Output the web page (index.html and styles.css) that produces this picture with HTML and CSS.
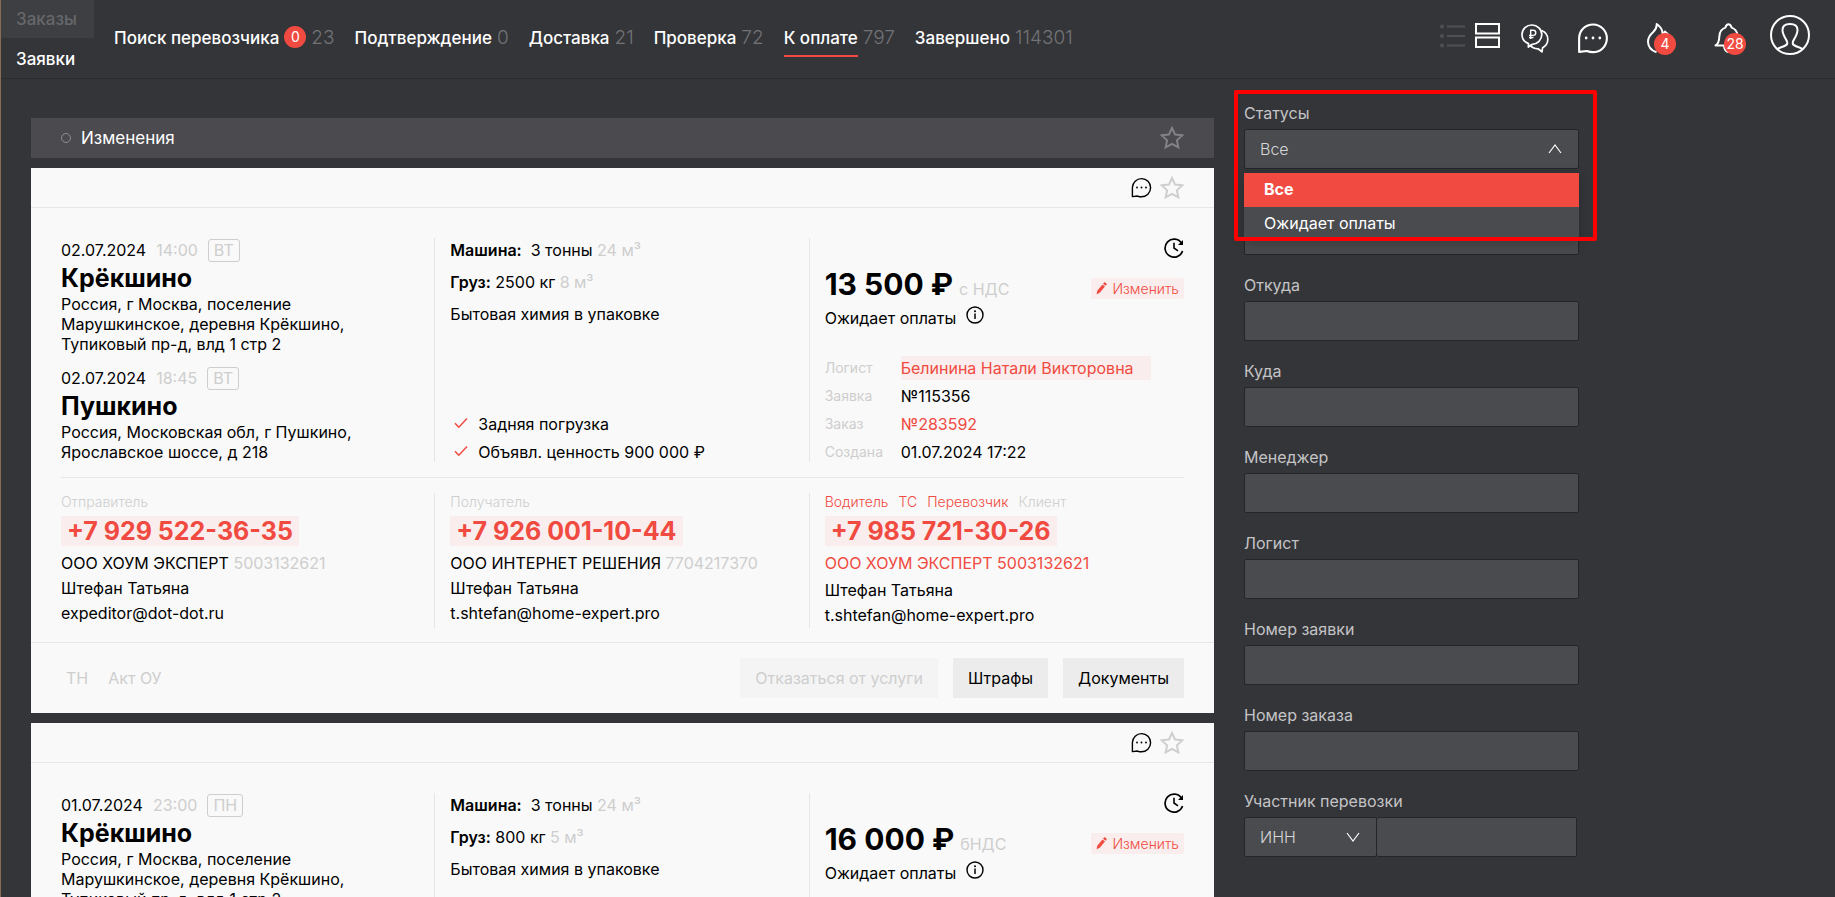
FILE: index.html
```html
<!DOCTYPE html>
<html lang="ru">
<head>
<meta charset="utf-8">
<title>Заявки</title>
<meta name="viewport" content="width=device-width, initial-scale=1">
<link rel="stylesheet" href="styles.css">
</head>
<body>
<svg class="sprite" aria-hidden="true">
  <symbol id="i-star" viewBox="0 0 22 22"><path d="M11 1.8l2.8 6 6.6.8-4.900 4.500 1.300 6.500L11 16.400l-5.800 3.200 1.300-6.500L1.600 8.600l6.600-.8z" fill="none" stroke="currentColor" stroke-width="1.8" stroke-linejoin="miter"/></symbol>
  <symbol id="i-chat" viewBox="0 0 30 30"><path d="M2 28V15A13 13 0 1 1 15 28.300c-2 0-4-.4-5.500-1.100z" fill="none" stroke="currentColor" stroke-width="2" stroke-linejoin="round"/><circle cx="8.600" cy="15" r="1.300" fill="currentColor"/><circle cx="15" cy="15" r="1.300" fill="currentColor"/><circle cx="21.400" cy="15" r="1.300" fill="currentColor"/></symbol>
  <symbol id="i-clock" viewBox="0 0 20 20"><path d="M17.600 5.200A9 9 0 1 0 18.600 13" fill="none" stroke="currentColor" stroke-width="1.700"/><path d="M19 2v5h-5z" fill="currentColor"/><path d="M10 4.800V10l4 2.800" fill="none" stroke="currentColor" stroke-width="1.600"/></symbol>
  <symbol id="i-info" viewBox="0 0 18 18"><circle cx="9" cy="9" r="8" fill="none" stroke="currentColor" stroke-width="1.400"/><path d="M9 7.600v5.400" stroke="currentColor" stroke-width="1.500"/><circle cx="9" cy="5.200" r="1" fill="currentColor"/></symbol>
  <symbol id="i-pen" viewBox="0 0 12 14"><path d="M0.600 13.400l.8-4L7 2.500l2.800 2.300-5.700 6.800zM7.700 1.700L8.800.5c.4-.4.8-.4 1.200-.1l1.400 1.200c.4.3.4.8.1 1.200l-1 1.200z" fill="currentColor"/></symbol>
  <symbol id="i-check" viewBox="0 0 14 12"><path d="M1 6.200l3.800 4L13 1.500" fill="none" stroke="currentColor" stroke-width="1.500"/></symbol>
</svg>
<div class="app">
  <header class="header">
    <nav class="modes" aria-label="Раздел">
      <a class="mode mode--muted" href="#orders">Заказы</a>
      <a class="mode" href="#requests">Заявки</a>
    </nav>
    <nav class="stages" aria-label="Этапы">
      <a class="stage" href="#search"><span class="stage__name">Поиск перевозчика</span><span class="badge">0</span><span class="stage__count">23</span></a>
      <a class="stage" href="#confirm"><span class="stage__name">Подтверждение</span><span class="stage__count">0</span></a>
      <a class="stage" href="#delivery"><span class="stage__name">Доставка</span><span class="stage__count">21</span></a>
      <a class="stage" href="#check"><span class="stage__name">Проверка</span><span class="stage__count">72</span></a>
      <a class="stage stage--active" href="#pay"><span class="stage__name">К оплате</span><span class="stage__count">797</span></a>
      <a class="stage" href="#done"><span class="stage__name">Завершено</span><span class="stage__count">114301</span></a>
    </nav>
    <div class="tools">
      <button class="tool tool--list" aria-label="Список"><svg width="26" height="24" viewBox="0 0 26 24" fill="currentColor"><circle cx="2" cy="2.500" r="2"/><circle cx="2" cy="12" r="2"/><circle cx="2" cy="21.500" r="2"/><path d="M7 1.500h18v2H7zM7 11h18v2H7zM7 20.500h18v2H7z"/></svg></button>
      <button class="tool tool--grid" aria-label="Карточки"><svg width="25" height="25" viewBox="0 0 25 25" fill="none" stroke="currentColor" stroke-width="2"><path d="M1 1h23v9.500H1zM1 14.500h23V24H1z"/></svg></button>
      <button class="tool tool--money" aria-label="Ставки"><svg width="28" height="29" viewBox="0 0 28 29" fill="none" stroke="currentColor" stroke-width="1.700"><path d="M7.500 19.600c-4-1.500-6.500-5-6.500-9A9.800 9.800 0 0 1 11 1c5.400 0 9.800 4.300 9.800 9.600s-4.300 9.500-9.400 9.700L7.300 23z" stroke-linejoin="round"/><path d="M20.500 6.500c3.800 1.500 6.300 5 6.300 8.800 0 3.700-2 6.700-5.200 8.400L21 27.800l-4-3c-3.500 0-6.500-1.500-8.300-4" stroke-linejoin="round"/><path d="M9.700 15V6.300h2.500a2.500 2.500 0 0 1 0 5.100H8M8 13.500h4.500" stroke-width="1.400"/></svg></button>
      <button class="tool tool--chat" aria-label="Сообщения"><svg width="32" height="32"><use href="#i-chat"/></svg></button>
      <button class="tool tool--fire" aria-label="Срочные"><svg width="26" height="31" viewBox="0 0 26 31" fill="none" stroke="currentColor" stroke-width="2"><path d="M9.500 29.300C4.500 27.500 1 23.500 1 18.500c0-4 2-6.700 5-9.300C8.500 6.900 10 4.500 9.700 1c4 2.500 6 6 6 10.500 1-.6 1.800-1.700 2.200-3C22.500 12 25 15.500 25 19c0 5-4 9-9 10.300" stroke-linejoin="round"/></svg><span class="badge badge--over">4</span></button>
      <button class="tool tool--bell" aria-label="Уведомления"><svg width="29" height="31" viewBox="0 0 29 31" fill="none" stroke="currentColor" stroke-width="2"><path d="M1.500 22.500c3-1.500 3.700-4.500 3.900-9.500.2-4.300 2.500-7.200 6-8.400C12 2.500 13 1.300 14.500 1.300s2.500 1.200 3.100 3.300c3.500 1.200 5.800 4.100 6 8.400.2 5 .9 8 3.900 9.500zM10 23c.5 4 2.500 6 4.500 6s4-2 4.500-6" stroke-linejoin="round"/></svg><span class="badge badge--over">28</span></button>
      <button class="tool tool--user" aria-label="Профиль"><svg width="40" height="40" viewBox="0 0 40 40" fill="none" stroke="currentColor" stroke-width="2"><circle cx="20" cy="20" r="19"/><path d="M7.500 34c2-2 8.500-2.500 9.600-5 .7-1.800-.4-3.500-1.500-5.300C14 21 12.500 18.300 12.500 15c0-4 3-6 7.500-6s7.500 2 7.500 6c0 3.300-1.500 6-3.100 8.700-1.100 1.800-2.200 3.500-1.500 5.300 1.100 2.500 7.600 3 9.600 5"/></svg></button>
    </div>
  </header>

  <div class="page">
    <main class="feed">
      <section class="changes">
        <span class="changes__dot"></span>
        <h2 class="changes__title">Изменения</h2>
        <button class="icon-btn icon-btn--dim" aria-label="В избранное"><svg width="24" height="24"><use href="#i-star"/></svg></button>
      </section>

      <article class="card">
        <div class="card__top">
          <button class="icon-btn" aria-label="Чат"><svg width="21" height="21"><use href="#i-chat"/></svg></button>
          <button class="icon-btn icon-btn--light" aria-label="В избранное"><svg width="24" height="24"><use href="#i-star"/></svg></button>
        </div>
        <div class="card__body">
          <div class="row row--main">
            <div class="col route">
              <div class="stop">
                <div class="stop__date">02.07.2024 <span class="stop__time">14:00</span><span class="day">ВТ</span></div>
                <h3 class="stop__city">Крёкшино</h3>
                <p class="stop__addr">Россия, г Москва, поселение Марушкинское, деревня Крёкшино, Тупиковый пр-д, влд 1 стр 2</p>
              </div>
              <div class="stop">
                <div class="stop__date">02.07.2024 <span class="stop__time">18:45</span><span class="day">ВТ</span></div>
                <h3 class="stop__city">Пушкино</h3>
                <p class="stop__addr">Россия, Московская обл, г Пушкино, Ярославское шоссе, д 218</p>
              </div>
            </div>
            <div class="col cargo">
              <p class="cargo__line"><b>Машина:</b>&nbsp; 3 тонны <span class="soft">24 м³</span></p>
              <p class="cargo__line"><b>Груз:</b> 2500 кг <span class="soft">8 м³</span></p>
              <p class="cargo__line">Бытовая химия в упаковке</p>
              <ul class="checks">
                <li class="checks__item"><svg width="14" height="12"><use href="#i-check"/></svg>Задняя погрузка</li>
                <li class="checks__item"><svg width="14" height="12"><use href="#i-check"/></svg>Объявл. ценность 900 000 ₽</li>
              </ul>
            </div>
            <div class="col deal">
              <button class="icon-btn deal__clock" aria-label="История"><svg width="20" height="20"><use href="#i-clock"/></svg></button>
              <div class="deal__price"><strong class="price">13 500 ₽</strong><span class="soft">с НДС</span><button class="edit"><svg width="11" height="13"><use href="#i-pen"/></svg>Изменить</button></div>
              <div class="deal__status">Ожидает оплаты<svg width="18" height="18"><use href="#i-info"/></svg></div>
              <dl class="facts">
                <dt>Логист</dt><dd><a class="mark" href="#logist">Белинина Натали Викторовна</a></dd>
                <dt>Заявка</dt><dd>№115356</dd>
                <dt>Заказ</dt><dd><a href="#order">№283592</a></dd>
                <dt>Создана</dt><dd>01.07.2024 17:22</dd>
              </dl>
            </div>
          </div>
          <div class="row row--contacts">
            <div class="col contact">
              <div class="roles">Отправитель</div>
              <a class="phone" href="tel:+79295223635">+7 929 522-36-35</a>
              <div class="contact__line">ООО ХОУМ ЭКСПЕРТ <span class="soft">5003132621</span></div>
              <div class="contact__line">Штефан Татьяна</div>
              <div class="contact__line">expeditor@dot-dot.ru</div>
            </div>
            <div class="col contact">
              <div class="roles">Получатель</div>
              <a class="phone" href="tel:+79260011044">+7 926 001-10-44</a>
              <div class="contact__line">ООО ИНТЕРНЕТ РЕШЕНИЯ <span class="soft">7704217370</span></div>
              <div class="contact__line">Штефан Татьяна</div>
              <div class="contact__line">t.shtefan@home-expert.pro</div>
            </div>
            <div class="col contact">
              <div class="roles"><a href="#driver">Водитель</a><a href="#truck">ТС</a><a href="#carrier">Перевозчик</a><span>Клиент</span></div>
              <a class="phone" href="tel:+79857213026">+7 985 721-30-26</a>
              <div class="contact__line contact__line--link"><a href="#company">ООО ХОУМ ЭКСПЕРТ 5003132621</a></div>
              <div class="contact__line">Штефан Татьяна</div>
              <div class="contact__line">t.shtefan@home-expert.pro</div>
            </div>
          </div>
        </div>
        <div class="card__foot">
          <span class="doc">ТН</span><span class="doc">Акт ОУ</span>
          <div class="actions">
            <button class="btn" disabled>Отказаться от услуги</button>
            <button class="btn">Штрафы</button>
            <button class="btn">Документы</button>
          </div>
        </div>
      </article>

      <article class="card">
        <div class="card__top">
          <button class="icon-btn" aria-label="Чат"><svg width="21" height="21"><use href="#i-chat"/></svg></button>
          <button class="icon-btn icon-btn--light" aria-label="В избранное"><svg width="24" height="24"><use href="#i-star"/></svg></button>
        </div>
        <div class="card__body">
          <div class="row row--main">
            <div class="col route">
              <div class="stop">
                <div class="stop__date">01.07.2024 <span class="stop__time">23:00</span><span class="day">ПН</span></div>
                <h3 class="stop__city">Крёкшино</h3>
                <p class="stop__addr">Россия, г Москва, поселение Марушкинское, деревня Крёкшино, Тупиковый пр-д, влд 1 стр 2</p>
              </div>
            </div>
            <div class="col cargo">
              <p class="cargo__line"><b>Машина:</b>&nbsp; 3 тонны <span class="soft">24 м³</span></p>
              <p class="cargo__line"><b>Груз:</b> 800 кг <span class="soft">5 м³</span></p>
              <p class="cargo__line">Бытовая химия в упаковке</p>
            </div>
            <div class="col deal">
              <button class="icon-btn deal__clock" aria-label="История"><svg width="20" height="20"><use href="#i-clock"/></svg></button>
              <div class="deal__price"><strong class="price">16 000 ₽</strong><span class="soft">бНДС</span><button class="edit"><svg width="11" height="13"><use href="#i-pen"/></svg>Изменить</button></div>
              <div class="deal__status">Ожидает оплаты<svg width="18" height="18"><use href="#i-info"/></svg></div>
            </div>
          </div>
        </div>
      </article>
    </main>

    <aside class="filters">
      <div class="field field--open">
        <label class="field__label" for="f-status">Статусы</label>
        <select class="control control--up" id="f-status"><option>Все</option><option>Ожидает оплаты</option></select>
        <ul class="menu" role="listbox" aria-label="Статусы">
          <li class="menu__item menu__item--on" role="option" aria-selected="true">Все</li>
          <li class="menu__item" role="option" aria-selected="false">Ожидает оплаты</li>
        </ul>
        <div class="frame"></div>
      </div>
      <div class="field"><span class="field__label"></span><input class="control" type="text" aria-label="Фильтр"></div>
      <div class="field"><label class="field__label" for="f-from">Откуда</label><input class="control" id="f-from" type="text"></div>
      <div class="field"><label class="field__label" for="f-to">Куда</label><input class="control" id="f-to" type="text"></div>
      <div class="field"><label class="field__label" for="f-manager">Менеджер</label><input class="control" id="f-manager" type="text"></div>
      <div class="field"><label class="field__label" for="f-logist">Логист</label><input class="control" id="f-logist" type="text"></div>
      <div class="field"><label class="field__label" for="f-req">Номер заявки</label><input class="control" id="f-req" type="text"></div>
      <div class="field"><label class="field__label" for="f-order">Номер заказа</label><input class="control" id="f-order" type="text"></div>
      <div class="field">
        <label class="field__label" for="f-party">Участник перевозки</label>
        <div class="pair">
          <select class="control control--down" aria-label="Тип"><option>ИНН</option></select>
          <input class="control" id="f-party" type="text">
        </div>
      </div>
    </aside>
  </div>
</div>
</body>
</html>
```
FILE: styles.css
```css
:root {
  --bg: #343539;
  --panel: #4a4b4e;
  --line: #e6e6e6;
  --soft: #cecece;
  --red: #f04a41;
  --tint: #f9eeed;
}

* { box-sizing: border-box; }

body {
  margin: 0;
  background: var(--bg);
  color: #000;
  font: 400 16px/20px Inter, sans-serif;
}

h2, h3, p, ul, dl, dd { margin: 0; padding: 0; }
ul { list-style: none; }
a { color: var(--red); text-decoration: none; }
button { font: inherit; color: inherit; border: 0; background: none; padding: 0; cursor: pointer; }
svg { display: block; flex: none; }
.sprite { position: absolute; width: 0; height: 0; }
.soft { color: var(--soft); }

.app {
  height: 100vh;
  overflow: hidden;
  border-left: 1px solid #8a6a50;
}

/* Header */
.header {
  display: flex;
  height: 79px;
  border-bottom: 1px solid #2a2b2e;
  color: #fff;
}
.modes { display: flex; flex-direction: column; width: 93px; }
.mode {
  height: 40px;
  padding-left: 15px;
  color: #fff;
  font-size: 17px;
  font-weight: 500;
  line-height: 42px;
}
.mode--muted { height: 38px; background: #3e3f43; color: #66676a; line-height: 38px; }
.stages { display: flex; gap: 20px; padding: 26px 0 0 20px; }
.stage { display: flex; align-items: flex-start; gap: 5px; color: #fff; font-size: 17px; line-height: 24px; white-space: nowrap; }
.stage__name { height: 31px; font-weight: 500; border-bottom: 2px solid transparent; }
.stage--active .stage__name { border-color: var(--red); }
.stage__count { color: #727376; font-size: 19px; font-weight: 300; }
.badge {
  width: 22px;
  height: 22px;
  border-radius: 50%;
  background: var(--red);
  color: #fff;
  font-size: 14px;
  font-weight: 400;
  line-height: 22px;
  text-align: center;
}
.tools { display: flex; align-items: flex-start; margin-left: auto; padding: 15px 25px 0 0; }
.tool { position: relative; }
.tool--list { margin: 9px 9px 0 0; color: #4f5053; }
.tool--grid { margin: 8px 21px 0 0; }
.tool--money { margin: 9px 28px 0 0; }
.tool--chat { margin: 7px 38px 0 0; }
.tool--fire { margin: 8px 41px 0 0; }
.tool--bell { margin: 8px 27px 0 0; }
.badge--over { position: absolute; left: 7px; top: 10px; }
.tool--bell .badge--over { left: 10px; }

/* Layout */
.page {
  display: grid;
  grid-template-columns: minmax(0, 1fr) 335px;
  gap: 30px;
  padding: 0 256px 0 30px;
}
.feed { display: flex; flex-direction: column; gap: 10px; padding-top: 39px; }

.changes {
  display: flex;
  align-items: center;
  height: 40px;
  padding: 0 30px;
  background: #4b4a4e;
  color: #fff;
}
.changes__dot { width: 10px; height: 10px; border: 1px solid #8f8f92; border-radius: 50%; }
.changes__title { margin: 0 auto 0 10px; font-size: 17px; font-weight: 400; line-height: 24px; }
.icon-btn--dim { color: #838286; }
.icon-btn--light { color: var(--soft); }

/* Card */
.card { background: #f9f9f9; }
.card__top {
  display: flex;
  justify-content: flex-end;
  align-items: center;
  gap: 8px;
  height: 40px;
  padding: 0 30px;
  border-bottom: 1px solid var(--line);
}
.card__body { padding: 30px 30px 14px; }
.row { display: grid; grid-template-columns: 373fr 374fr 375fr; }
.row--main { padding-bottom: 15px; border-bottom: 1px solid var(--line); }
.row--contacts { padding-top: 15px; }
.col { min-width: 0; padding: 0 15px; border-left: 1px solid var(--line); }
.col:first-child { padding-left: 0; border-left: 0; }
.col:last-child { padding-right: 0; }

.route { display: flex; flex-direction: column; gap: 12px; }
.stop__date { display: flex; align-items: center; gap: 10px; height: 24px; }
.stop__time { color: var(--soft); }
.day {
  height: 23px;
  padding: 0 5px;
  border: 1px solid var(--soft);
  border-radius: 3px;
  color: var(--soft);
  line-height: 21px;
}
.stop__city { font-size: 25px; font-weight: 700; line-height: 32px; }
.stop__addr { max-width: 310px; }

.cargo { display: flex; flex-direction: column; gap: 8px; }
.cargo__line { line-height: 24px; }
.cargo__line b { font-weight: 600; }
.checks { display: flex; flex-direction: column; gap: 8px; margin-top: auto; padding-left: 4px; }
.checks__item { display: flex; align-items: center; gap: 10px; }
.checks__item svg { margin-bottom: 3px; color: var(--red); }

.deal { display: flex; flex-direction: column; }
.deal__clock { align-self: flex-end; }
.deal__price { display: flex; align-items: baseline; gap: 6px; height: 40px; margin-top: 6px; }
.price { font-size: 30px; font-weight: 700; line-height: 40px; }
.edit {
  display: flex;
  align-items: center;
  gap: 5px;
  height: 21px;
  margin-left: auto;
  padding: 0 5px;
  border-radius: 2px;
  background: var(--tint);
  color: var(--red);
  font-size: 14px;
  font-weight: 300;
}
.deal__status { display: flex; align-items: center; gap: 10px; height: 28px; }
.deal__status svg { margin-bottom: 6px; }
.facts {
  display: grid;
  grid-template-columns: 76px 1fr;
  row-gap: 8px;
  margin-top: auto;
}
.facts dt { color: var(--soft); font-size: 14px; }
.mark { padding: 2px 17px 2px 0; background: var(--tint); }

.contact { display: flex; flex-direction: column; align-items: flex-start; }
.roles { display: flex; gap: 10px; margin-bottom: 6px; color: var(--soft); font-size: 14px; font-weight: 300; line-height: 17px; }
.phone {
  margin-bottom: 5px;
  padding: 0 6px;
  background: var(--tint);
  font-size: 25px;
  font-weight: 700;
  line-height: 30px;
}
.contact__line { line-height: 25px; }
.contact__line--link { margin-bottom: 2px; }

.card__foot {
  display: flex;
  align-items: center;
  gap: 20px;
  height: 71px;
  padding: 0 30px 0 35px;
  border-top: 1px solid var(--line);
}
.doc { color: var(--soft); }
.actions { display: flex; gap: 15px; margin-left: auto; }
.btn { height: 40px; padding: 0 15px; background: #ececec; }
.btn:disabled { background: #f4f4f4; color: var(--soft); }

/* Filters */
.filters { display: flex; flex-direction: column; gap: 18px; padding-top: 22px; }
.field { position: relative; }
.field__label { display: block; height: 24px; margin-bottom: 4px; color: #c4c4c6; font-size: 16px; font-weight: 400; line-height: 24px; }
.control {
  display: block;
  width: 100%;
  height: 40px;
  padding: 0 15px;
  border: 1px solid #242528;
  border-radius: 2px;
  background: var(--panel);
  color: #d6d6d8;
  font: inherit;
  font-weight: 300;
  appearance: none;
}
.control--up, .control--down { background-repeat: no-repeat; background-position: right 16px center; background-size: 14px 10px; }
.control--up { background-image: url("data:image/svg+xml,%3Csvg xmlns='http://www.w3.org/2000/svg' viewBox='0 0 14 10'%3E%3Cpath d='M1 9l6-8 6 8' fill='none' stroke='white' stroke-width='1.2'/%3E%3C/svg%3E"); }
.control--down { background-image: url("data:image/svg+xml,%3Csvg xmlns='http://www.w3.org/2000/svg' viewBox='0 0 14 10'%3E%3Cpath d='M1 1l6 8 6-8' fill='none' stroke='white' stroke-width='1.2'/%3E%3C/svg%3E"); }
.pair { display: grid; grid-template-columns: 133px 1fr; padding-right: 2px; }
.pair .control + .control { border-left: 0; }
.menu {
  position: absolute;
  top: 72px;
  left: 0;
  right: 0;
  z-index: 2;
  background: var(--panel);
  box-shadow: 0 4px 12px rgba(0, 0, 0, .2);
}
.menu__item { height: 34px; padding: 0 20px; color: #fff; font-size: 16px; font-weight: 400; line-height: 33px; }
.menu__item--on { background: var(--red); font-weight: 700; }
.frame {
  position: absolute;
  top: -11px;
  left: -10px;
  right: -18px;
  height: 151px;
  z-index: 3;
  border: 4px solid #f00;
  border-radius: 2px;
  pointer-events: none;
}
```
